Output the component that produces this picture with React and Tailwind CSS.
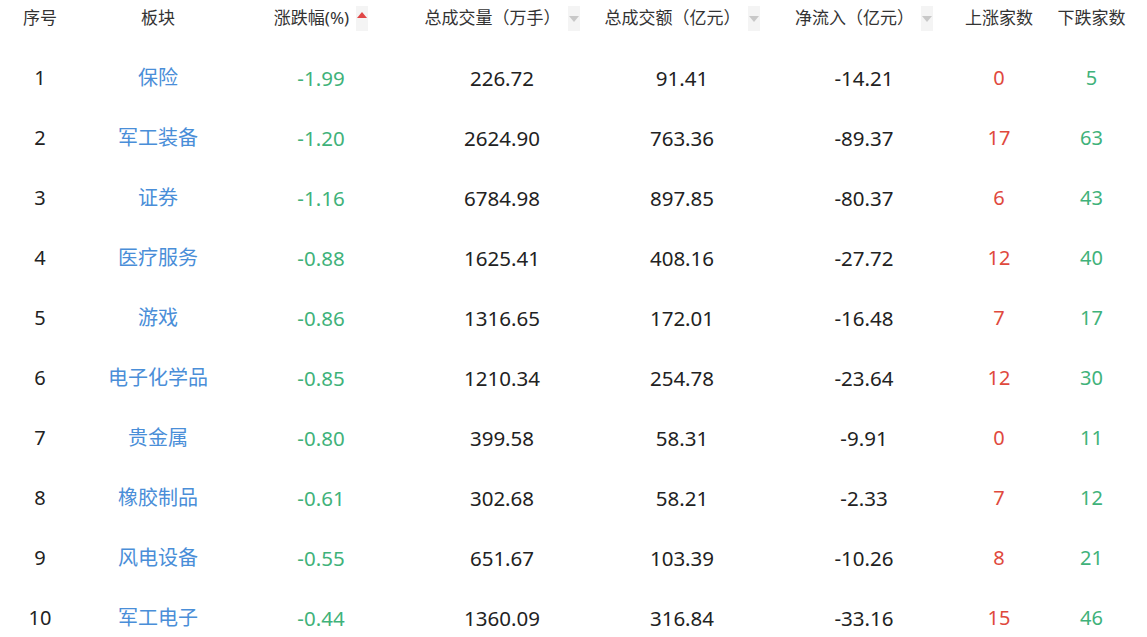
import React from "react";

const rows = [
  [1, "保险", "-1.99", "226.72", "91.41", "-14.21", 0, 5],
  [2, "军工装备", "-1.20", "2624.90", "763.36", "-89.37", 17, 63],
  [3, "证券", "-1.16", "6784.98", "897.85", "-80.37", 6, 43],
  [4, "医疗服务", "-0.88", "1625.41", "408.16", "-27.72", 12, 40],
  [5, "游戏", "-0.86", "1316.65", "172.01", "-16.48", 7, 17],
  [6, "电子化学品", "-0.85", "1210.34", "254.78", "-23.64", 12, 30],
  [7, "贵金属", "-0.80", "399.58", "58.31", "-9.91", 0, 11],
  [8, "橡胶制品", "-0.61", "302.68", "58.21", "-2.33", 7, 12],
  [9, "风电设备", "-0.55", "651.67", "103.39", "-10.26", 8, 21],
  [10, "军工电子", "-0.44", "1360.09", "316.84", "-33.16", 15, 46],
];

const widths = ["w-[80px]", "w-[156px]", "w-[170px]", "w-[192px]", "w-[168px]", "w-[196px]", "w-[74px]", "w-[111px]"];

function SortBox({ up }) {
  return (
    <span className="ml-[7px] inline-flex h-[25px] w-[12px] flex-col items-center justify-center bg-[#f4f4f4]">
      {up ? (
        <svg width="10" height="6" viewBox="0 0 10 6" className="-mt-[6px]">
          <polygon points="5,0 10,6 0,6" fill="#e04646" />
        </svg>
      ) : (
        <svg width="10" height="6" viewBox="0 0 10 6" className="mt-[2px]">
          <polygon points="0,0 10,0 5,6" fill="#c8c8c8" />
        </svg>
      )}
    </span>
  );
}

export default function App() {
  const font = { fontFamily: '"Noto Sans", "Noto Sans CJK SC", sans-serif' };
  return (
    <div className="h-[637px] w-[1147px] overflow-hidden bg-white text-[#333]" style={font}>
      <div className="flex h-[36px] items-center text-[17px] text-[#333]">
        <div className={`${widths[0]} flex justify-center`}>序号</div>
        <div className={`${widths[1]} flex justify-center`}>板块</div>
        <div className={`${widths[2]} flex items-center justify-center`}>
          <span>涨跌幅(%)</span>
          <SortBox up />
        </div>
        <div className={`${widths[3]} flex items-center justify-center`}>
          <span>总成交量（万手）</span>
          <SortBox />
        </div>
        <div className={`${widths[4]} flex items-center justify-center`}>
          <span>总成交额（亿元）</span>
          <SortBox />
        </div>
        <div className={`${widths[5]} flex items-center justify-center`}>
          <span>净流入（亿元）</span>
          <SortBox />
        </div>
        <div className={`${widths[6]} flex justify-center`}>上涨家数</div>
        <div className={`${widths[7]} flex justify-center`}>下跌家数</div>
      </div>
      <div className="mt-[12px] flex flex-col">
        {rows.map((r) => (
          <div key={r[0]} className="flex h-[60px] items-center text-[20px]">
            <div className={`${widths[0]} text-center text-[#222]`}>{r[0]}</div>
            <div className={`${widths[1]} text-center text-[#4a8ed8]`}>{r[1]}</div>
            <div className={`${widths[2]} text-center text-[20.5px] text-[#3fb27a]`}>{r[2]}</div>
            <div className={`${widths[3]} text-center text-[20.5px] text-[#222]`}>{r[3]}</div>
            <div className={`${widths[4]} text-center text-[20.5px] text-[#222]`}>{r[4]}</div>
            <div className={`${widths[5]} text-center text-[20.5px] text-[#222]`}>{r[5]}</div>
            <div className={`${widths[6]} text-center text-[#e0493d]`}>{r[6]}</div>
            <div className={`${widths[7]} text-center text-[#3fb27a]`}>{r[7]}</div>
          </div>
        ))}
      </div>
    </div>
  );
}
